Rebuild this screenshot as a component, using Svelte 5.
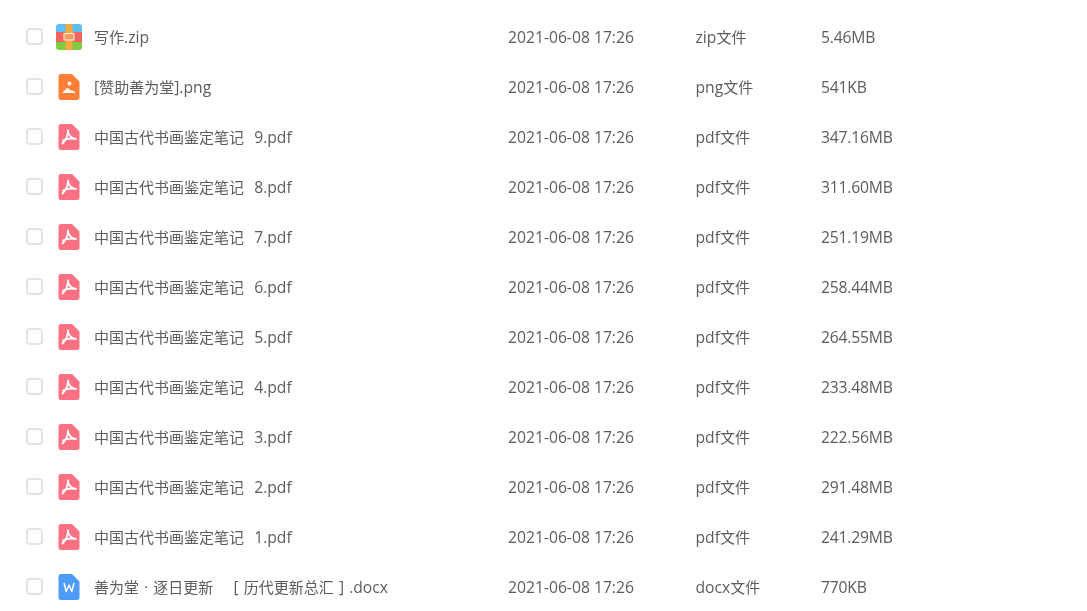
<script>
    const pdfName = (n) => `中国古代书画鉴定笔记  ${n}.pdf`;
    const files = [
        { name: "写作.zip", icon: "zip", type: "zip文件", size: "5.46MB" },
        { name: "[赞助善为堂].png", icon: "png", type: "png文件", size: "541KB" },
        { name: pdfName(9), icon: "pdf", type: "pdf文件", size: "347.16MB" },
        { name: pdfName(8), icon: "pdf", type: "pdf文件", size: "311.60MB" },
        { name: pdfName(7), icon: "pdf", type: "pdf文件", size: "251.19MB" },
        { name: pdfName(6), icon: "pdf", type: "pdf文件", size: "258.44MB" },
        { name: pdfName(5), icon: "pdf", type: "pdf文件", size: "264.55MB" },
        { name: pdfName(4), icon: "pdf", type: "pdf文件", size: "233.48MB" },
        { name: pdfName(3), icon: "pdf", type: "pdf文件", size: "222.56MB" },
        { name: pdfName(2), icon: "pdf", type: "pdf文件", size: "291.48MB" },
        { name: pdfName(1), icon: "pdf", type: "pdf文件", size: "241.29MB" },
        { name: "善为堂 · 逐日更新    [ 历代更新总汇 ] .docx", icon: "doc", type: "docx文件", size: "770KB" },
    ];
    const sheet = "M3 0H14L21.500 7.500V23.500a2.500 2.500 0 0 1-2.500 2.500H3a2.500 2.500 0 0 1-2.500-2.500V2.500A2.500 2.500 0 0 1 3 0Z";

    // Han text sits a little smaller than the latin text next to it
    const parts = (text) => text.split(/([\u4e00-\u9fff]+)/).filter(Boolean);
    const isHan = (text) => /[\u4e00-\u9fff]/.test(text);
</script>

{#snippet label(text)}
    {#each parts(text) as part}
        <span class:han={isHan(part)}>{part}</span>
    {/each}
{/snippet}

<div class="list">
    {#each files as file}
        <div class="row">
            <span class="check"></span>
            <span class="icon">
                {#if file.icon === "zip"}
                    <svg width="26" height="26" viewBox="0 0 26 26">
                        <defs><clipPath id="zipclip"><rect width="26" height="26" rx="3" /></clipPath></defs>
                        <g clip-path="url(#zipclip)">
                            <rect width="26" height="8" fill="#5cc0f5" />
                            <rect y="8" width="26" height="10" fill="#f2625f" />
                            <rect y="18" width="26" height="8" fill="#7fcb3f" />
                            <rect x="9.500" width="7" height="26" fill="#f5a93f" />
                            <rect x="8" y="9.500" width="10" height="6.500" fill="#f79a66" stroke="#fde8c0" stroke-width="1.200" />
                        </g>
                    </svg>
                {:else if file.icon === "png"}
                    <svg width="22" height="26" viewBox="0 0 22 26">
                        <path d={sheet} fill="#ff7f37" />
                        <circle cx="11.500" cy="9.500" r="1.900" fill="#fff" />
                        <path d="M4 19L8.500 14.500Q10 13.500 11 15L12.500 16.500Q13.500 15.800 14.500 16.500L18 19Z" fill="#fff" />
                    </svg>
                {:else if file.icon === "pdf"}
                    <svg width="22" height="26" viewBox="0 0 22 26">
                        <path d={sheet} fill="#fb7083" />
                        <path d="M10 6.500C10 10 9 15 4.500 19.500M10 6.500c0 4 3 8 8 8.500M5 16.500c4-2 8-2.500 12-1.500" fill="none" stroke="#fff" stroke-width="1.800" stroke-linecap="round" />
                    </svg>
                {:else}
                    <svg width="22" height="26" viewBox="0 0 22 26">
                        <path d={sheet} fill="#4d9cf8" />
                        <path d="M6 9L8.200 17.500L11 11L13.800 17.500L16 9" fill="none" stroke="#fff" stroke-width="1.500" stroke-linejoin="round" />
                    </svg>
                {/if}
            </span>
            <span class="name">{@render label(file.name)}</span>
            <span class="date">2021-06-08 17:26</span>
            <span class="type">{@render label(file.type)}</span>
            <span class="size">{file.size}</span>
        </div>
    {/each}
</div>

<style>
    :global(body) {
        background: #fff;
        overflow: hidden;
    }

    .list {
        padding-top: 11px;
        font-family: "Open Sans", "Noto Sans CJK SC", sans-serif;
        font-size: 15.7px;
        color: #5c5c5c;
        filter: blur(0.5px);
    }

    .row {
        display: flex;
        align-items: center;
        height: 50px;
        padding-left: 26px;
    }

    .check {
        box-sizing: border-box;
        width: 17px;
        height: 17px;
        border: 2px solid #e3e3e3;
        border-radius: 4px;
        margin-right: 13px;
    }

    .icon {
        display: flex;
        justify-content: center;
        width: 26px;
        margin-right: 12px;
        padding-top: 2px;
    }

    .name,
    .date,
    .type,
    .size {
        padding-top: 2px;
    }

    .name {
        width: 414px;
        white-space: pre;
        word-spacing: 1px;
    }

    .han {
        font-size: 15px;
    }

    .date {
        width: 187.500px;
    }

    .type {
        width: 125.500px;
    }

    .size {
        letter-spacing: -0.2px;
    }
</style>
